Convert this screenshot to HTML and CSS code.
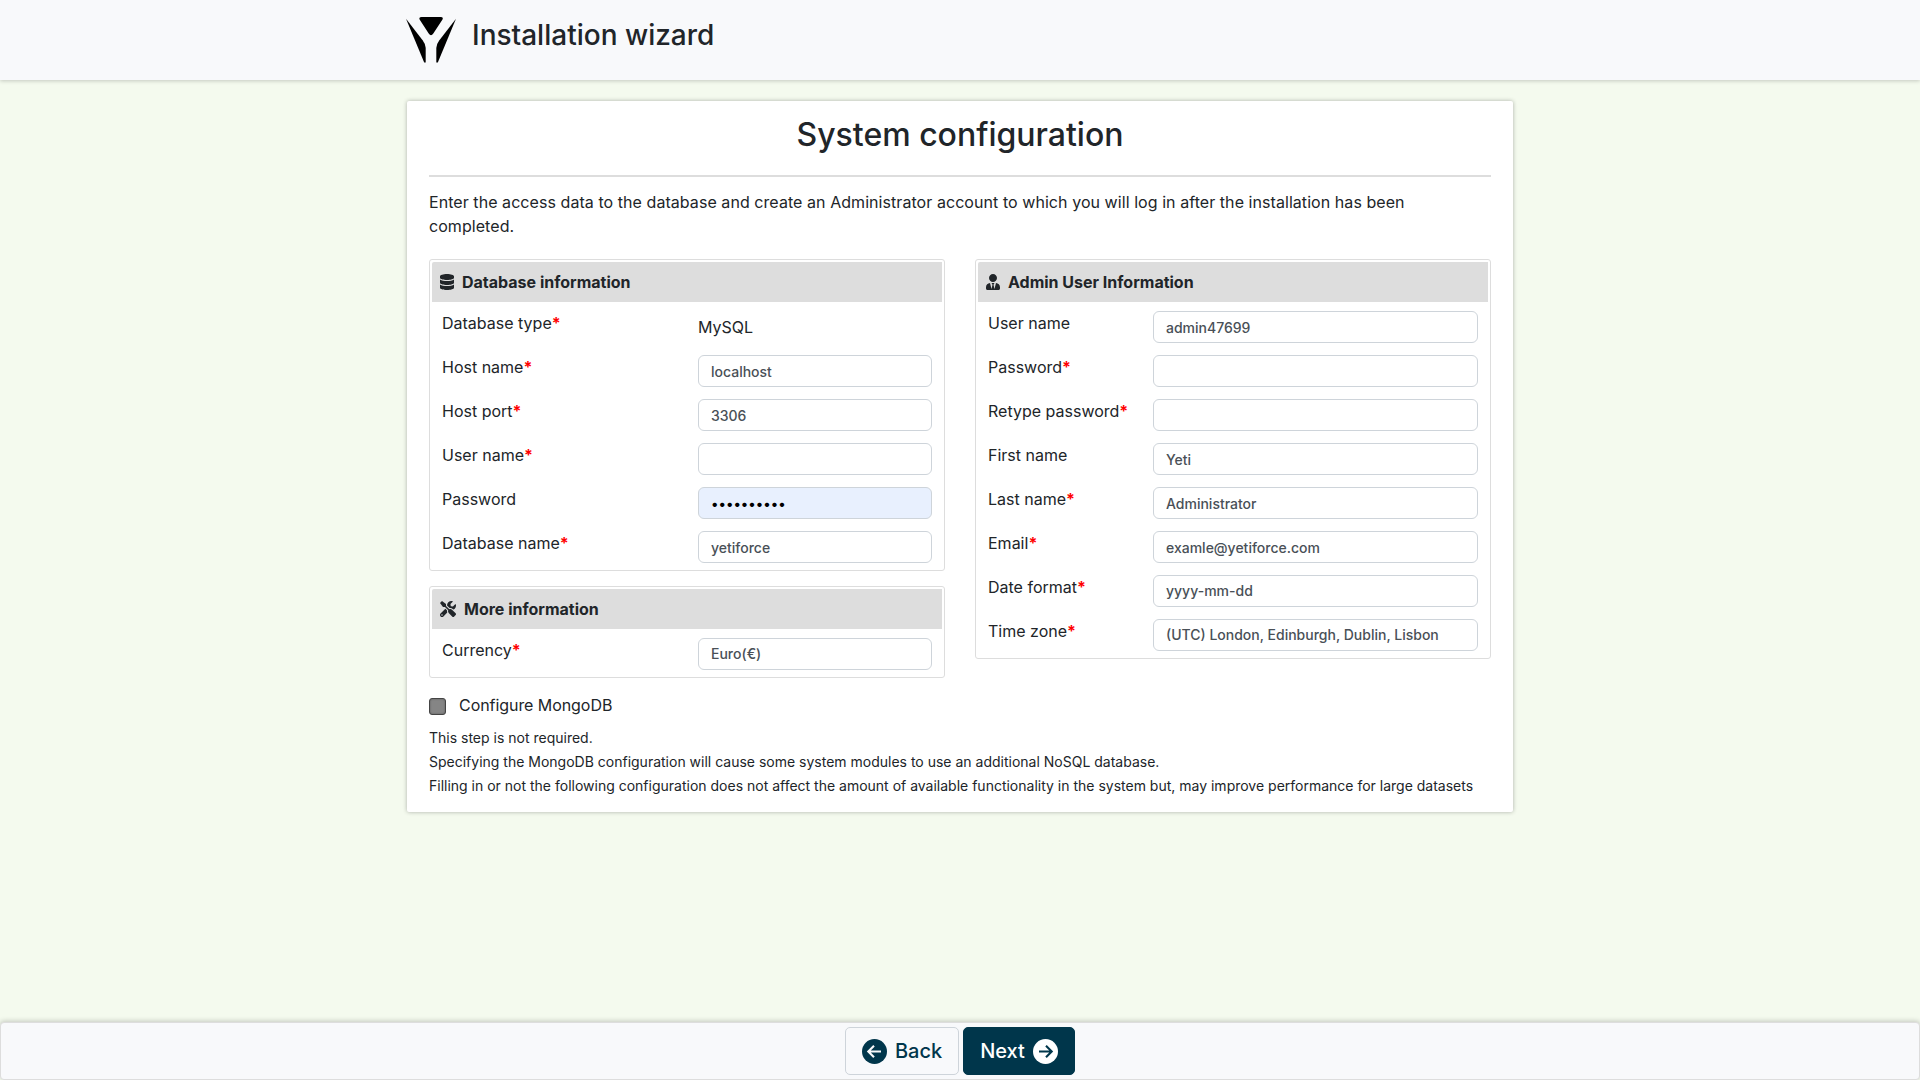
FILE: index.html
```html
<!DOCTYPE html>
<html lang="en">
<head>
<meta charset="utf-8">
<title>Installation wizard</title>
<link rel="stylesheet" href="styles.css">
</head>
<body>
<header class="topbar">
  <div class="topbar-inner">
    <svg class="logo" viewBox="0 0 50 46" aria-hidden="true">
      <path d="M15.5 0H34.9Q37.6.2 36.5 2.6L27.3 16.4Q25 20 22.7 16.4L13.6 2.6Q12.6 .3 15.5 0Z"/>
      <path d="M0 1.8 16.8 23.6Q19.7 27.5 19.7 31V45.6H18.2Z"/>
      <path d="M50 1.8 33.2 23.6Q30.3 27.5 30.3 31V45.6H31.8Z"/>
    </svg>
    <h1 class="brand">Installation wizard</h1>
  </div>
</header>
<main class="card">
  <h2 class="title">System configuration</h2>
  <p class="intro">Enter the access data to the database and create an Administrator account to which you will log in after the installation has been completed.</p>
  <div class="columns">
    <div class="column">
      <section class="box">
        <h3 class="box-head">
          <svg class="ico" width="14" height="16" viewBox="0 0 448 512"><path d="M448 73.143v45.714C448 159.143 347.667 192 224 192S0 159.143 0 118.857V73.143C0 32.857 100.333 0 224 0s224 32.857 224 73.143zM448 176v102.857C448 319.143 347.667 352 224 352S0 319.143 0 278.857V176c48.125 33.143 136.208 48.572 224 48.572S399.874 209.143 448 176zm0 160v102.857C448 479.143 347.667 512 224 512S0 479.143 0 438.857V336c48.125 33.143 136.208 48.572 224 48.572S399.874 369.143 448 336z"/></svg>
          Database information
        </h3>
        <div class="row"><span class="label">Database type<b>*</b></span><span class="plain">MySQL</span></div>
        <div class="row"><span class="label">Host name<b>*</b></span><input class="field" type="text" value="localhost"></div>
        <div class="row"><span class="label">Host port<b>*</b></span><input class="field" type="text" value="3306"></div>
        <div class="row"><span class="label">User name<b>*</b></span><input class="field" type="text"></div>
        <div class="row"><span class="label">Password</span><input class="field filled" type="password" value="yetiforce1"></div>
        <div class="row"><span class="label">Database name<b>*</b></span><input class="field" type="text" value="yetiforce"></div>
      </section>
      <section class="box">
        <h3 class="box-head">
          <svg class="ico" width="16" height="16" viewBox="0 0 512 512"><path d="M501.1 395.7L384 278.6c-23.1-23.1-57.6-27.6-85.4-13.9L192 158.1V96L64 0 0 64l96 128h62.1l106.6 106.6c-13.6 27.8-9.2 62.3 13.9 85.4l117.1 117.1c14.6 14.6 38.2 14.6 52.7 0l52.7-52.7c14.5-14.6 14.5-38.2 0-52.7zM331.7 225c28.3 0 54.9 11 74.9 31l19.4 19.4c15.8-6.9 30.8-16.5 43.8-29.5 37.1-37.1 49.7-89.3 37.9-136.7-2.2-9-13.5-12.1-20.1-5.5l-74.4 74.4-67.9-11.3L334 98.9l74.4-74.4c6.6-6.6 3.4-17.9-5.7-20.2-47.4-11.7-99.6.9-136.6 37.9-28.5 28.5-41.9 66.1-41.2 103.6l82.1 82.1c8.1-1.9 16.5-2.9 24.7-2.9zm-103.9 82l-56.7-56.7L18.7 402.8c-25 25-25 65.5 0 90.5s65.5 25 90.5 0l123.6-123.6c-7.6-19.9-9.9-41.6-5-62.7zM64 472c-13.2 0-24-10.8-24-24 0-13.3 10.7-24 24-24s24 10.7 24 24c0 13.2-10.7 24-24 24z"/></svg>
          More information
        </h3>
        <div class="row"><span class="label">Currency<b>*</b></span><div class="field select">Euro(€)</div></div>
      </section>
    </div>
    <div class="column">
      <section class="box admin">
        <h3 class="box-head">
          <svg class="ico" width="14" height="16" viewBox="0 0 448 512"><path d="M224 256c70.7 0 128-57.3 128-128S294.7 0 224 0 96 57.3 96 128s57.3 128 128 128zm95.8 32.6L272 480l-32-136 32-56h-96l32 56-32 136-47.8-191.4C56.9 292 0 350.3 0 422.4V464c0 26.5 21.5 48 48 48h352c26.5 0 48-21.5 48-48v-41.6c0-72.1-56.9-130.4-128.2-133.8z"/></svg>
          Admin User Information
        </h3>
        <div class="row"><span class="label">User name</span><input class="field" type="text" value="admin47699"></div>
        <div class="row"><span class="label">Password<b>*</b></span><input class="field" type="password"></div>
        <div class="row"><span class="label">Retype password<b>*</b></span><input class="field" type="password"></div>
        <div class="row"><span class="label">First name</span><input class="field" type="text" value="Yeti"></div>
        <div class="row"><span class="label">Last name<b>*</b></span><input class="field" type="text" value="Administrator"></div>
        <div class="row"><span class="label">Email<b>*</b></span><input class="field" type="text" value="examle@yetiforce.com"></div>
        <div class="row"><span class="label">Date format<b>*</b></span><div class="field select">yyyy-mm-dd</div></div>
        <div class="row"><span class="label">Time zone<b>*</b></span><div class="field select">(UTC) London, Edinburgh, Dublin, Lisbon</div></div>
      </section>
    </div>
  </div>
  <div class="mongo"><span class="check"></span>Configure MongoDB</div>
  <p class="note">This step is not required.<br>Specifying the MongoDB configuration will cause some system modules to use an additional NoSQL database.<br>Filling in or not the following configuration does not affect the amount of available functionality in the system but, may improve performance for large datasets</p>
</main>
<footer class="actions">
  <button class="btn back" type="button">
    <svg class="arrow" viewBox="0 0 25 25"><circle cx="12.5" cy="12.5" r="12.5" fill="#00364b"/><path d="M19 12.5H6.8M12 6.8 6.3 12.5 12 18.2" fill="none" stroke="#f8f9fb" stroke-width="2.1"/></svg>
    Back
  </button>
  <button class="btn next" type="button">
    Next
    <svg class="arrow" viewBox="0 0 25 25"><circle cx="12.5" cy="12.5" r="12.5" fill="#fff"/><path d="M6 12.5H18.2M13 6.8 18.7 12.5 13 18.2" fill="none" stroke="#00364b" stroke-width="2.1"/></svg>
  </button>
</footer>
</body>
</html>
```
FILE: styles.css
```css
* { box-sizing: border-box; }
body {
  margin: 0;
  height: 1080px;
  overflow: hidden;
  display: flex;
  flex-direction: column;
  background: #f4faee;
  font-family: Inter, "Liberation Sans", sans-serif;
  font-size: 16px;
  line-height: 24px;
  color: #212529;
}
h1, h2, h3, p { margin: 0; font-weight: 500; }
.topbar {
  flex: none;
  height: 80px;
  background: #f8f9fb;
  box-shadow: 0 1px 4px rgba(0, 0, 0, .2);
}
.topbar-inner {
  width: 1108px;
  margin: 0 auto;
  padding-top: 17px;
  display: flex;
  align-items: flex-start;
  gap: 16px;
}
.logo { width: 50px; height: 46px; }
.brand { font-size: 28px; line-height: 34px; margin-top: 1px; }
.card {
  width: 1106px;
  height: 711px;
  flex: none;
  margin: 21px auto 0;
  padding: 0 22px;
  background: #fff;
  border-radius: 2px;
  box-shadow: 0 0 4px rgba(0, 0, 0, .3);
}
.title {
  height: 76px;
  padding-top: 15px;
  font-size: 32px;
  line-height: 38px;
  text-align: center;
  border-bottom: 2px solid #ddd;
}
.intro { font-weight: 400; padding: 13px 40px 0 0; letter-spacing: .06px; }
.columns { display: flex; gap: 30px; margin-top: 21px; height: 420px; }
.column { width: 516px; display: flex; flex-direction: column; gap: 15px; }
.box { border: 1px solid #ddd; border-radius: 3px; padding: 2px 2px 7px; }
.box-head {
  display: flex;
  align-items: center;
  gap: 8px;
  height: 40px;
  padding-left: 8px;
  margin-bottom: 9px;
  background: #ddd;
  border-radius: 2px 0 0 0;
  font-size: 16px;
  font-weight: 700;
}
.ico { fill: #212529; flex: none; }
.row {
  display: flex;
  align-items: flex-start;
  justify-content: space-between;
  height: 32px;
  margin: 0 10px 12px;
}
.row:last-child { margin-bottom: 0; }
.label b { color: #f00; }
.plain { width: 234px; padding-top: 4px; }
.field {
  width: 234px;
  height: 32px;
  margin: 0;
  padding: 2px 12px;
  border: 1px solid #ced4da;
  border-radius: 6px;
  background: #fff;
  color: #495057;
  font: 500 14px/26px Inter, "Liberation Sans", sans-serif;
  white-space: nowrap;
}
.admin .field { width: 325px; }
.filled { background: #e8f0fe; color: #000; }
.mongo { display: flex; align-items: center; gap: 13px; margin-top: 14px; letter-spacing: -.06px; }
.check {
  width: 17px;
  height: 17px;
  margin-top: 3px;
  border: 1px solid #444;
  border-radius: 3px;
  background: #858585;
  box-shadow: inset 0 0 2px #555;
}
.note { font-size: 14px; font-weight: 400; margin-top: 9px; white-space: nowrap; }
.actions {
  flex: none;
  margin-top: auto;
  height: 58px;
  padding-top: 4px;
  display: flex;
  justify-content: center;
  gap: 4px;
  background: #f8f9fb;
  border: 1px solid #ddd;
  border-radius: 4px;
  box-shadow: 0 -1px 5px rgba(0, 0, 0, .2);
}
.btn {
  display: flex;
  align-items: center;
  justify-content: center;
  gap: 8px;
  height: 48px;
  padding: 0;
  border: 1px solid #ced4da;
  border-radius: 5px;
  font: 500 20px/30px Inter, "Liberation Sans", sans-serif;
}
.back { width: 114px; background: #f8f9fb; color: #00364b; }
.next { width: 112px; background: #00364b; border-color: #00364b; color: #fff; }
.arrow { width: 25px; height: 25px; }
```
